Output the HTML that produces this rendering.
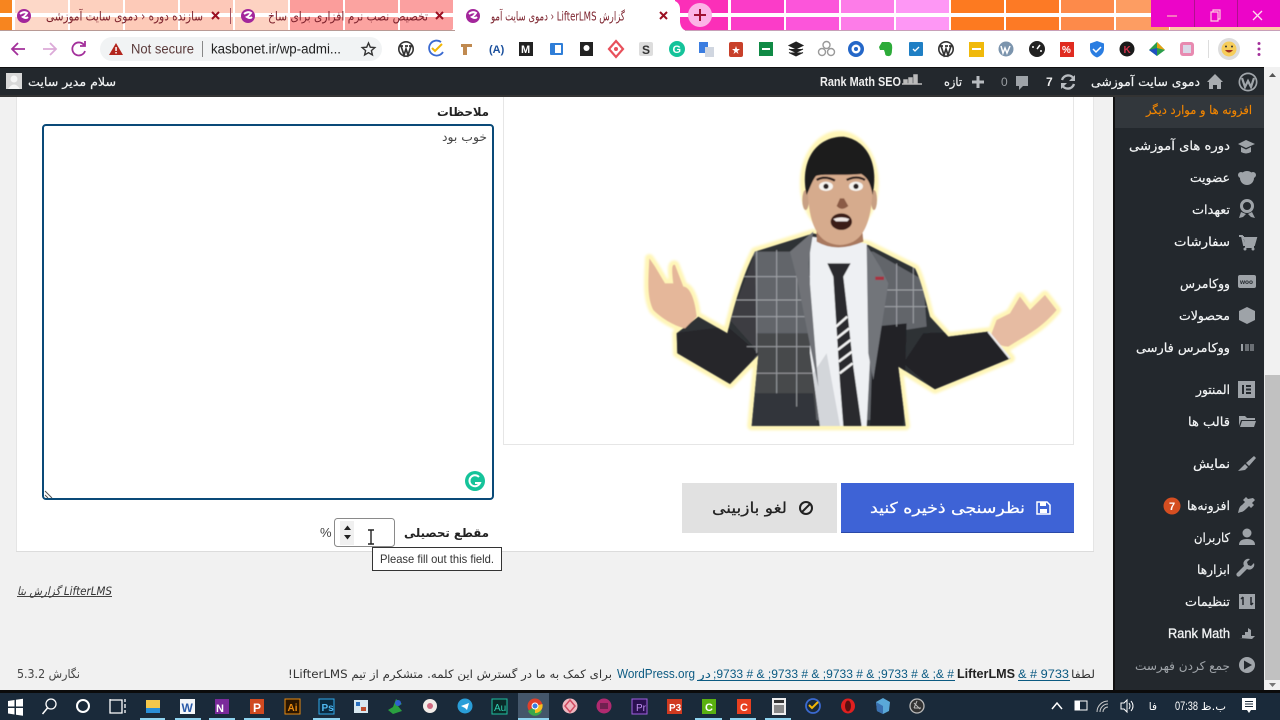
<!DOCTYPE html>
<html lang="fa">
<head>
<meta charset="utf-8">
<title>LifterLMS</title>
<style>
html,body{margin:0;padding:0;width:1280px;height:720px;overflow:hidden;background:#f1f1f1}
svg{position:absolute;left:0;top:0;display:block;filter:blur(.3px)}
text{font-family:"DejaVu Sans","Liberation Sans",sans-serif}
.l{font-family:"Liberation Sans","DejaVu Sans",sans-serif}
.r{direction:rtl;text-anchor:start}
.m{fill:#f2f4f5;font-size:12.5px;stroke:#f2f4f5;stroke-width:.2px}
.d{stroke:#333;stroke-width:.15px}
</style>
</head>
<body>
<svg width="1280" height="720" viewBox="0 0 1280 720" xmlns="http://www.w3.org/2000/svg">
<defs>
<clipPath id="jk"><path d="M520,340 L345,395 Q300,480 262,640 L175,590 L110,640 L112,700 L270,792 L355,705 L335,918 L797,918 L775,740 L885,808 L1112,715 L1045,635 L925,650 L870,590 Q840,470 825,445 L685,375 Z"/></clipPath>
<filter id="gl" x="-10%" y="-10%" width="120%" height="120%"><feGaussianBlur stdDeviation="4"/></filter>
<filter id="sf" x="-5%" y="-5%" width="110%" height="110%"><feGaussianBlur stdDeviation="1.400"/></filter>
<g id="fav"><circle r="7" fill="#a3269b"/><path d="M-4,-2 Q0,-5 3,-3 Q1,0 -1,1 Q2,3 4,1" fill="none" stroke="#fff" stroke-width="2"/></g>
<g id="wp"><circle r="8" fill="#333"/><circle r="6.4" fill="#fff"/><path d="M-5,-3 L-2,6 L0,0 L2,6 L5,-3 M-6,-3 H-3 M-1,-3 H2 M3,-3 H6" fill="none" stroke="#333" stroke-width="1.7"/></g>
</defs>

<!-- tab strip -->
<rect width="1280" height="31" fill="#fff"/>
<rect x="0" y="0" width="12" height="31" fill="#f7851f"/>
<rect x="15" y="0" width="53" height="31" fill="#fdd8c8"/>
<rect x="70" y="0" width="53" height="31" fill="#fdd0be"/>
<rect x="125" y="0" width="53" height="31" fill="#fdcab8"/>
<rect x="180" y="0" width="53" height="31" fill="#fdc8b8"/>
<rect x="235" y="0" width="53" height="31" fill="#fdd2c2"/>
<rect x="290" y="0" width="53" height="31" fill="#fb9d9b"/>
<rect x="345" y="0" width="53" height="31" fill="#fba3a0"/>
<rect x="400" y="0" width="53" height="31" fill="#fba0a0"/>
<rect x="675" y="0" width="53" height="31" fill="#fb2fb8"/>
<rect x="731" y="0" width="53" height="31" fill="#fb3cc8"/>
<rect x="786" y="0" width="53" height="31" fill="#fc55da"/>
<rect x="841" y="0" width="53" height="31" fill="#fd7ce8"/>
<rect x="896" y="0" width="53" height="31" fill="#fe97f5"/>
<rect x="951" y="0" width="53" height="31" fill="#fd7a20"/>
<rect x="1006" y="0" width="53" height="31" fill="#fd7a25"/>
<rect x="1061" y="0" width="53" height="31" fill="#fd8a4a"/>
<rect x="1116" y="0" width="53" height="31" fill="#fd9d62"/>
<rect x="1170" y="27" width="110" height="4" fill="#fdc9a8"/>
<rect x="0" y="13" width="456" height="4" fill="#fff"/>
<rect x="675" y="13" width="500" height="4" fill="#fff"/>
<rect x="1151" y="0" width="129" height="27" fill="#ec05c8"/>
<rect x="1194" y="0" width="1" height="27" fill="#b0108f"/>
<rect x="1237" y="0" width="1" height="27" fill="#b0108f"/>
<path d="M1167,16 H1177" stroke="#fbb" stroke-width="1.2"/>
<path d="M1211,12 h7 v9 h-7 z M1213,12 v-2 h7 v9 h-2" fill="none" stroke="#fcd" stroke-width="1.2"/>
<path d="M1253,11 l9,9 M1262,11 l-9,9" stroke="#fde" stroke-width="1.3"/>
<path d="M447,31 Q455,31 456,22 V8 Q456,0 466,0 H669 Q679,0 680,8 V22 Q681,31 689,31 Z" fill="#fff"/>
<rect x="0" y="30" width="455" height="1" fill="#b89a95"/>
<rect x="685" y="30" width="595" height="1" fill="#c8a0b8"/>
<use href="#fav" x="24" y="16"/>
<text class="r" x="203" y="20.500" font-size="12.500" fill="#7a1f2a" textLength="157" lengthAdjust="spacingAndGlyphs">سازنده دوره ‹ دموی سایت آموزشی</text>
<path d="M212,12 l7,7 M219,12 l-7,7" stroke="#9b1022" stroke-width="2"/>
<rect x="230" y="8" width="1" height="16" fill="#a05060"/>
<use href="#fav" x="248" y="16"/>
<text class="r" x="428" y="20.500" font-size="12.500" fill="#7a1f2a" textLength="160" lengthAdjust="spacingAndGlyphs">تخصیص نصب نرم افزاری برای ساخ</text>
<path d="M436,12 l7,7 M443,12 l-7,7" stroke="#9b1022" stroke-width="2"/>
<use href="#fav" x="473" y="16"/>
<text class="r" x="625" y="20.500" font-size="12.500" fill="#7a1f2a" textLength="134" lengthAdjust="spacingAndGlyphs">گزارش LifterLMS ‹ دموی سایت آمو</text>
<path d="M660,12 l7,7 M667,12 l-7,7" stroke="#9b1022" stroke-width="2"/>
<circle cx="700" cy="15" r="12" fill="#fcb4e6"/>
<path d="M694,15 H706 M700,9 V21" stroke="#a01030" stroke-width="2"/>

<!-- toolbar -->
<rect y="31" width="1280" height="36" fill="#fff"/>
<path d="M25,49 H13 M18,43 L12,49 L18,55" fill="none" stroke="#a3309b" stroke-width="1.8"/>
<path d="M43,49 H55 M50,43 L56,49 L50,55" fill="none" stroke="#dcaad8" stroke-width="1.8"/>
<path d="M84,45 A6.5,6.5 0 1 0 85,51 M85,41 V46 H80" fill="none" stroke="#a3309b" stroke-width="1.8"/>
<rect x="100" y="37" width="282" height="24" rx="12" fill="#f1f3f4"/>
<path d="M116,43 L123,55 H109 Z" fill="#b3261e"/>
<rect x="115.300" y="47" width="1.500" height="4" fill="#fff"/><rect x="115.300" y="52" width="1.500" height="1.500" fill="#fff"/>
<text class="l" x="131" y="53.500" font-size="13.500" fill="#5a3a3a" textLength="63" lengthAdjust="spacingAndGlyphs">Not secure</text>
<rect x="202" y="41" width="1" height="16" fill="#888"/>
<text class="l" x="211" y="53.500" font-size="13.500" fill="#222" textLength="130" lengthAdjust="spacingAndGlyphs">kasbonet.ir/wp-admi...</text>
<path d="M368.500,43 l1.800,4.200 4.500,.4 -3.400,3 1,4.400 -3.900,-2.300 -3.900,2.300 1,-4.400 -3.400,-3 4.500,-.4 z" fill="none" stroke="#333" stroke-width="1.400"/>
<use href="#wp" x="406" y="49"/>
<path d="M441,42 A7.500,7.500 0 1 0 443,52" fill="none" stroke="#3b6ad0" stroke-width="1.800"/><path d="M432,48 l3,3 7,-7" fill="none" stroke="#f2b705" stroke-width="2"/>
<path d="M461,44 H472 V47 H467 V55 H463 V47 H461 Z" fill="#c08a50"/>
<text class="l" x="489" y="53" font-size="11" font-weight="bold" fill="#1a4f9c">(A)</text>
<rect x="519" y="42" width="14" height="14" fill="#222"/><text class="l" x="521" y="53" font-size="11" font-weight="bold" fill="#fff">M</text>
<rect x="550" y="43" width="13" height="12" rx="1" fill="#2f7ed8"/><rect x="555" y="45" width="6" height="8" fill="#fff"/>
<rect x="580" y="42" width="13" height="14" fill="#222"/><circle cx="586.500" cy="48" r="3" fill="#fff"/>
<path d="M616,41 l7,8 -7,8 -7,-8 z" fill="none" stroke="#e8505b" stroke-width="2.200"/><circle cx="616" cy="49" r="2" fill="#e8505b"/>
<rect x="639" y="42" width="14" height="14" rx="2" fill="#ddd"/><text class="l" x="642" y="54" font-size="12" font-weight="bold" fill="#333">S</text>
<circle cx="677" cy="49" r="8" fill="#15c39a"/><text class="l" x="672.500" y="53" font-size="11" font-weight="bold" fill="#fff">G</text>
<rect x="699" y="42" width="9" height="11" fill="#3b7de0"/><rect x="705" y="47" width="9" height="10" fill="#d0d6e0"/>
<rect x="729" y="42" width="14" height="15" rx="2" fill="#c8402a"/><path d="M736,46 l1,3 h3 l-2.500,2 1,3 -2.500,-2 -2.500,2 1,-3 -2.500,-2 h3 z" fill="#fff"/>
<rect x="759" y="42" width="14" height="14" fill="#108a45"/><rect x="762" y="48" width="8" height="2" fill="#fff"/>
<path d="M796,42 l7,3.500 -7,3.500 -7,-3.500 z M789,49 l7,3.500 7,-3.500 M789,52.500 l7,3.500 7,-3.500" fill="#222" stroke="#222" stroke-width="1"/>
<g fill="none" stroke="#999" stroke-width="1.400"><circle cx="822" cy="52" r="3.500"/><circle cx="831" cy="52" r="3.500"/><circle cx="826.500" cy="45" r="3.500"/></g>
<circle cx="856" cy="49" r="8" fill="#2467c8"/><circle cx="856" cy="49" r="4.500" fill="#fff"/><circle cx="856" cy="49" r="2" fill="#2467c8"/>
<path d="M882,42 h7 q4,1 3,8 q0,7 -4,6 q-3,0 -3,-3 l-1,-3 h-4 l-1,-3 z" fill="#2dab39"/>
<rect x="909" y="42" width="14" height="14" rx="1" fill="#1f7fc4"/><path d="M913,49 l2,2 4,-4" fill="none" stroke="#fff" stroke-width="1.300"/>
<use href="#wp" x="946" y="49"/>
<rect x="969" y="42" width="15" height="15" fill="#f0b90b"/><rect x="972" y="48" width="9" height="2" fill="#fff"/>
<circle cx="1006" cy="49" r="7.500" fill="#7b94ad"/><path d="M1001,46 l2,7 2,-5 2,5 3,-7" fill="none" stroke="#fff" stroke-width="1.500"/>
<circle cx="1037" cy="49" r="8" fill="#222"/><path d="M1037,49 l3,-4" stroke="#fff" stroke-width="1.500"/><circle cx="1033" cy="47" r="1" fill="#fff"/><circle cx="1041" cy="51" r="1" fill="#fff"/>
<rect x="1060" y="42" width="14" height="15" fill="#e02b20"/><text class="l" x="1062" y="53" font-size="10" font-weight="bold" fill="#fff">%</text>
<path d="M1097,41 l7,2.500 v5 q0,6 -7,9 q-7,-3 -7,-9 v-5 z" fill="#2a7de1"/><path d="M1093,49 l3,3 5,-5" fill="none" stroke="#fff" stroke-width="1.500"/>
<circle cx="1127" cy="49" r="7.500" fill="#1a1a1a"/><text class="l" x="1123.500" y="53" font-size="10" font-weight="bold" fill="#d0304a">K</text>
<path d="M1149,50 l8,-8 8,8 -8,6 z" fill="#2a9d4a"/><path d="M1157,42 l8,8 -8,-2 z" fill="#e8a010"/><path d="M1149,50 l8,-2 v8 z" fill="#2050c0"/>
<rect x="1180" y="42" width="14" height="14" rx="3" fill="#e88ab0"/><rect x="1183" y="45" width="8" height="8" fill="#d9d9e8"/>
<rect x="1208" y="40" width="1" height="18" fill="#ddd"/>
<circle cx="1229" cy="49" r="11" fill="#ddd"/><circle cx="1229" cy="49" r="7.500" fill="#f6cd5a"/><path d="M1225,50 q4,5 8,0 z" fill="#a03020"/><circle cx="1226" cy="46.500" r="1" fill="#333"/><circle cx="1232" cy="46.500" r="1" fill="#333"/>
<circle cx="1259" cy="43.500" r="1.500" fill="#a3309b"/><circle cx="1259" cy="49" r="1.500" fill="#a3309b"/><circle cx="1259" cy="54.500" r="1.500" fill="#a3309b"/>

<!-- page -->
<rect y="96" width="1264" height="594" fill="#f1f1f1"/>
<rect x="1264" y="67" width="16" height="625" fill="#f1f1f1"/>
<rect x="1265" y="375" width="15" height="305" fill="#c1c1c1"/>
<path d="M1269,77 h7 l-3.500,-4 z" fill="#555"/>
<path d="M1269,683 h7 l-3.500,4 z" fill="#777"/>

<!-- card -->
<rect x="16" y="96" width="1078" height="455" fill="#fff"/>
<rect x="16" y="551" width="1078" height="1" fill="#dcdcdc"/>
<rect x="16" y="96" width="1" height="455" fill="#e5e5e5"/>
<rect x="1093" y="96" width="1" height="455" fill="#e5e5e5"/>
<path d="M503.500,96 V444.500 H1073.500 V96" fill="none" stroke="#e6e6e6"/>

<!-- person -->
<g transform="translate(640,120) scale(.3333)">
<g fill="#fff6b8" stroke="#fff6b8" stroke-width="26" stroke-linejoin="round" filter="url(#gl)">
<path d="M520,340 L345,395 Q300,480 262,640 L175,590 L110,640 L112,700 L270,792 L355,705 L335,918 L797,918 L775,740 L885,808 L1112,715 L1045,635 L925,650 L870,590 Q840,470 825,445 L685,375 Z"/>
<path d="M28,415 C25,480 20,530 40,570 C70,600 110,620 135,625 L170,590 C165,540 150,500 130,500 L105,435 C95,430 95,450 100,490 L75,490 L45,440 Z"/>
<path d="M1055,640 C1060,670 1085,680 1105,680 C1150,650 1200,630 1250,570 L1215,525 L1170,570 L1140,530 L1110,580 L1070,600Z"/>
<ellipse cx="598" cy="190" rx="105" ry="145"/>
</g>
<g filter="url(#sf)">
<path d="M520,340 L345,395 Q300,480 262,640 L175,590 L110,640 L112,700 L270,792 L355,705 L335,918 L797,918 L775,740 L885,808 L1112,715 L1045,635 L925,650 L870,590 Q840,470 825,445 L685,375 Z" fill="#2e3034"/>
<g clip-path="url(#jk)">
<path d="M340,395 L700,395 L850,480 L860,620 L730,640 L715,900 L520,900 L350,720 Z" fill="#62656a"/>
<path d="M345,640 L520,640 L530,918 L335,918 Z" fill="#46484c"/>
<path d="M345,820 L520,820 L530,918 L335,918 Z" fill="#33353a"/>
<path d="M700,620 L800,610 L790,918 L690,918 Z" fill="#232427"/>
<path d="M100,640 L262,620 L355,700 L270,795 L110,710 Z" fill="#26272a"/>
<path d="M270,600 L345,400 L350,690 Z" fill="#3c3e42"/>
<path d="M850,640 L1112,630 L1112,720 L885,810 L790,730 Z" fill="#232427"/>
<g stroke="#b3b6ba" stroke-width="3" fill="none" opacity=".8">
<path d="M300,470 H520 M285,540 H510 M275,590 H510 M320,680 H515 M320,760 H520 M720,510 H850 M720,560 H860"/>
<path d="M350,390 V700 M410,390 V820 M470,390 V860 M770,430 V620 M820,440 V610"/>
</g>
</g>
<path d="M510,350 L680,370 L695,620 L680,918 L540,918 L510,700 Z" fill="#eef0f3"/>
<path d="M560,700 L600,918 L540,918 L520,760 Z" fill="#d3d6da"/>
<path d="M520,335 L450,395 L472,480 L515,700 L535,800 L505,430 Z" fill="#6f7277"/>
<path d="M680,375 L720,440 L745,490 L700,780 L685,700 Z" fill="#72757a"/>
<path d="M562,430 L632,430 L610,470 L625,600 L640,740 L665,918 L610,918 L600,790 L580,470 Z" fill="#2a2b2e"/>
<g stroke="#f5f5f5" stroke-width="7"><path d="M588,620 L622,590 M590,655 L628,625 M593,690 L632,660 M596,725 L636,695 M599,760 L638,730"/></g>
<path d="M706,470 h26 v10 h-26 z" fill="#a8303f"/>
<path d="M530,300 L530,365 Q590,400 670,365 L665,310 Z" fill="#a9795f"/>
<ellipse cx="497" cy="240" rx="10" ry="30" fill="#c8a084"/><ellipse cx="702" cy="240" rx="9" ry="30" fill="#c8a084"/>
<path d="M503,200 Q505,335 560,365 Q600,385 640,365 Q695,335 698,200 Q695,130 600,130 Q505,130 503,200 Z" fill="#d6ab8d"/>
<path d="M500,225 C478,120 530,50 610,50 C680,60 718,130 698,225 C692,195 686,175 664,162 C600,168 550,160 528,168 C515,185 510,205 500,225 Z" fill="#1d1a1a"/>
<ellipse cx="558" cy="199" rx="21" ry="14" fill="#f7f4f0"/><circle cx="558" cy="199" r="8" fill="#2a2020"/>
<ellipse cx="648" cy="199" rx="21" ry="14" fill="#f7f4f0"/><circle cx="648" cy="199" r="8" fill="#2a2020"/>
<path d="M530,180 Q555,165 585,182 M620,180 Q650,165 675,180" fill="none" stroke="#2a1f1a" stroke-width="7"/>
<path d="M590,258 Q605,275 625,258 L612,235 L600,235 Z" fill="#8a5a45"/>
<ellipse cx="604" cy="305" rx="32" ry="25" fill="#3a1a18"/><path d="M580,297 Q604,287 628,297 L622,304 H588 Z" fill="#f0e8e5"/>
<path d="M28,415 C25,480 20,530 40,570 C70,600 110,620 135,625 L170,590 C165,540 150,500 130,500 L105,435 C95,430 95,450 100,490 L75,490 L45,440 Z" fill="#e5b79a"/>
<path d="M1055,640 C1060,670 1085,680 1105,680 C1150,650 1200,630 1250,570 L1215,525 L1170,570 L1140,530 L1110,580 L1070,600Z" fill="#e6bba2"/>
<path d="M1045,635 L1110,715" stroke="#eee" stroke-width="6" fill="none"/>
</g>
</g>

<!-- form -->
<text class="r" x="489" y="116" font-size="12" font-weight="bold" fill="#222" textLength="52" lengthAdjust="spacingAndGlyphs">ملاحظات</text>
<rect x="43" y="125" width="450" height="374" rx="3" fill="#fff" stroke="#0a4a78" stroke-width="2"/>
<text class="r" x="487" y="141" font-size="12" fill="#444" textLength="45" lengthAdjust="spacingAndGlyphs">خوب بود</text>
<circle cx="475" cy="481" r="10" fill="#15c39a"/>
<path d="M479,477 A5.500,5.500 0 1 0 480,483 H475" fill="none" stroke="#fff" stroke-width="2"/>
<path d="M45,491 l7,7 M45,495 l3,3" stroke="#555"/>

<rect x="334.500" y="518.500" width="60" height="28" rx="3" fill="#fff" stroke="#8a8a8a"/>
<rect x="340" y="521" width="14" height="24" fill="#f0f0f0"/>
<path d="M344,530 h7 l-3.500,-4.500 z M344,535 h7 l-3.500,4.500 z" fill="#222"/>
<text class="l" x="320" y="537" font-size="13" fill="#444">%</text>
<text class="r" x="489" y="537" font-size="12" font-weight="bold" fill="#222" textLength="85" lengthAdjust="spacingAndGlyphs">مقطع تحصیلی</text>
<path d="M368,530 h6 M368,544 h6 M371,530 V544" stroke="#222" stroke-width="1.400"/>
<rect x="372.500" y="547.500" width="129" height="23" fill="#fff" stroke="#333"/>
<text class="l" x="380" y="563" font-size="12" fill="#333" textLength="114" lengthAdjust="spacingAndGlyphs">Please fill out this field.</text>

<!-- buttons -->
<rect x="841" y="483" width="233" height="50" fill="#3e63d6"/>
<rect x="841" y="532" width="233" height="1" fill="#2a48a8"/>
<rect x="682" y="483" width="155" height="50" fill="#e1e1e1"/>
<path d="M1037,502 h10 l3,3 v9 h-13 z" fill="none" stroke="#fff" stroke-width="1.500"/><rect x="1040" y="502" width="6" height="4" fill="#fff"/><rect x="1040" y="509" width="7" height="4" fill="#fff"/>
<text class="r" x="1025" y="513" font-size="15" fill="#fff" stroke="#fff" stroke-width=".25" textLength="155" lengthAdjust="spacingAndGlyphs">نظرسنجی ذخیره کنید</text>
<circle cx="806" cy="508" r="6" fill="none" stroke="#222" stroke-width="2"/><path d="M802,512 l8,-8" stroke="#222" stroke-width="2"/>
<text class="r" x="787" y="513" font-size="15" fill="#222" stroke="#222" stroke-width=".25" textLength="75" lengthAdjust="spacingAndGlyphs">لغو بازبینی</text>

<!-- footer -->
<text x="112" y="595" font-size="11.500" font-style="italic" fill="#333" class="r" textLength="95" lengthAdjust="spacingAndGlyphs">LifterLMS گزارش بتا</text>
<rect x="17" y="596" width="95" height="1" fill="#444"/>
<text x="80" y="678" font-size="12" fill="#444" class="r" textLength="63" lengthAdjust="spacingAndGlyphs">نگارش 5.3.2</text>
<g font-size="11.500">
<text x="1095" y="678" class="r" fill="#333" textLength="24" lengthAdjust="spacingAndGlyphs">لطفا</text>
<text x="1018" y="678" fill="#0b5a82" class="l" font-size="12" textLength="51" lengthAdjust="spacingAndGlyphs">&amp; # 9733</text>
<text x="957" y="678" fill="#222" class="l" font-size="12.500" font-weight="bold" textLength="58" lengthAdjust="spacingAndGlyphs">LifterLMS</text>
<text x="713" y="678" fill="#0b5a82" class="l" font-size="12" textLength="241" lengthAdjust="spacingAndGlyphs">;9733 # &amp; ;9733 # &amp; ;9733 # &amp; ;9733 # &amp; ;&amp; #</text>
<text x="711" y="678" class="r" fill="#0b5a82" textLength="13" lengthAdjust="spacingAndGlyphs">در</text>
<text x="617" y="678" fill="#0b5a82" class="l" font-size="12.500" textLength="78" lengthAdjust="spacingAndGlyphs">WordPress.org</text>
<text x="612" y="678" class="r" fill="#333" textLength="324" lengthAdjust="spacingAndGlyphs">برای کمک به ما در گسترش این کلمه. متشکرم از تیم LifterLMS!</text>
</g>
<rect x="697" y="680" width="258" height="1" fill="#0b5a82"/>
<rect x="1018" y="680" width="52" height="1" fill="#0b5a82"/>

<!-- admin bar -->
<rect y="67" width="1264" height="29" fill="#23282d"/>
<rect y="67" width="1264" height="1" fill="#111"/>
<rect y="95" width="1264" height="2" fill="#333"/>
<rect x="6" y="73" width="16" height="16" fill="#d8d8d8"/><circle cx="14" cy="79" r="3.500" fill="#f5f5f5"/><path d="M8,89 q6,-9 12,0 z" fill="#f5f5f5"/>
<text class="r m" x="116" y="86" style="font-size:12px" textLength="88" lengthAdjust="spacingAndGlyphs">سلام مدیر سایت</text>
<text class="l" x="820" y="86" font-size="12.500" font-weight="bold" fill="#eee" textLength="81" lengthAdjust="spacingAndGlyphs">Rank Math SEO</text>
<path d="M902,84 h20 M904,84 v-4 h3 v4 M909,84 v-6 h3 v6 M914,84 v-9 h3 v9" stroke="#bbb" fill="#bbb" stroke-width="1.500"/>
<text class="r m" x="962" y="86" style="font-size:12px" textLength="18" lengthAdjust="spacingAndGlyphs">تازه</text>
<path d="M972,82 h12 M978,76 v12" stroke="#b8bcc0" stroke-width="3"/>
<text class="l" x="1001" y="86" font-size="12" fill="#9a9ea2">0</text>
<path d="M1016,76 h12 v10 h-5 l-4,4 v-4 h-3 z" fill="#9ea3a8"/>
<text class="l" x="1046" y="86" font-size="12" font-weight="bold" fill="#eee">7</text>
<path d="M1074,79 A6.500,6.500 0 0 0 1062,80 M1062,85 A6.500,6.500 0 0 0 1074,84" fill="none" stroke="#b8bcc0" stroke-width="2.400"/><path d="M1075,75 v6 h-6 z M1061,89 v-6 h6 z" fill="#b8bcc0"/>
<text class="r m" x="1200" y="86" style="font-size:12px" textLength="109" lengthAdjust="spacingAndGlyphs">دموی سایت آموزشی</text>
<path d="M1215,74 l8,8 h-2 v7 h-4 v-4 h-4 v4 h-4 v-7 h-2 z" fill="#a8acb0"/>
<circle cx="1248" cy="82" r="9.500" fill="#a0a5aa"/><circle cx="1248" cy="82" r="7.800" fill="#23282d"/><path d="M1242,78 l3,9 3,-6 3,6 3,-9" fill="none" stroke="#a0a5aa" stroke-width="2.200"/>

<!-- sidebar -->
<rect x="1115" y="97" width="149" height="595" fill="#23282d"/>
<rect x="1113" y="97" width="2" height="595" fill="#111"/>
<rect x="1115" y="97" width="149" height="31" fill="#32373c"/>
<text class="r" x="1252" y="114" font-size="12" fill="#f18500" stroke="#f18500" stroke-width=".15" textLength="106" lengthAdjust="spacingAndGlyphs">افزونه ها و موارد دیگر</text>
<text class="r m" x="1230" y="150" textLength="101" lengthAdjust="spacingAndGlyphs">دوره های آموزشی</text>
<text class="r m" x="1230" y="182" textLength="40" lengthAdjust="spacingAndGlyphs">عضویت</text>
<text class="r m" x="1230" y="214" textLength="38" lengthAdjust="spacingAndGlyphs">تعهدات</text>
<text class="r m" x="1230" y="246" textLength="56" lengthAdjust="spacingAndGlyphs">سفارشات</text>
<text class="r m" x="1230" y="288" textLength="50" lengthAdjust="spacingAndGlyphs">ووکامرس</text>
<text class="r m" x="1230" y="320" textLength="51" lengthAdjust="spacingAndGlyphs">محصولات</text>
<text class="r m" x="1230" y="352" textLength="94" lengthAdjust="spacingAndGlyphs">ووکامرس فارسی</text>
<text class="r m" x="1230" y="394" textLength="34" lengthAdjust="spacingAndGlyphs">المنتور</text>
<text class="r m" x="1230" y="426" textLength="42" lengthAdjust="spacingAndGlyphs">قالب ها</text>
<text class="r m" x="1230" y="468" textLength="37" lengthAdjust="spacingAndGlyphs">نمایش</text>
<text class="r m" x="1230" y="510" textLength="43" lengthAdjust="spacingAndGlyphs">افزونه‌ها</text>
<circle cx="1172" cy="506" r="8.500" fill="#d54e21"/><text class="l" x="1169" y="510" font-size="11" font-weight="bold" fill="#fff">7</text>
<text class="r m" x="1230" y="542" textLength="36" lengthAdjust="spacingAndGlyphs">کاربران</text>
<text class="r m" x="1230" y="574" textLength="33" lengthAdjust="spacingAndGlyphs">ابزارها</text>
<text class="r m" x="1230" y="606" textLength="45" lengthAdjust="spacingAndGlyphs">تنظیمات</text>
<text class="l" x="1168" y="638" font-size="13.500" fill="#f2f4f5" stroke="#f2f4f5" stroke-width=".3" textLength="62" lengthAdjust="spacingAndGlyphs">Rank Math</text>
<text class="r" x="1230" y="670" font-size="12" fill="#a0a5aa" textLength="95" lengthAdjust="spacingAndGlyphs">جمع کردن فهرست</text>
<g fill="#9ea3a8">
<path d="M1238,144 l8,-4 9,4 -9,4 z M1241,147 v5 q5,3 10,0 v-5 l-5,2.500 z"/>
<circle cx="1247" cy="178" r="7"/><circle cx="1241" cy="175" r="3"/><circle cx="1253" cy="175" r="3"/>
<circle cx="1247" cy="206" r="5.500" fill="none" stroke="#9ea3a8" stroke-width="3"/><path d="M1241,212 l-2,6 4,-1 3,-3 z M1252,212 l3,6 -4,-1 -3,-3 z"/>
<path d="M1239,236 h3 l2,9 h10 l2,-7 h-13 v-2 M1245,247 h9" fill="none" stroke="#9ea3a8" stroke-width="2"/><path d="M1244,239 h11 l-1.500,5 h-9 z"/><circle cx="1245" cy="249" r="1.500"/><circle cx="1253" cy="249" r="1.500"/>
<rect x="1238" y="275" width="18" height="13" rx="2"/>
<path d="M1247,307 l8,4 v9 l-8,4 -8,-4 v-9 z"/>
<rect x="1241" y="344" width="2" height="7"/><rect x="1245" y="344" width="4" height="7" fill="#6a6f74"/><rect x="1250" y="344" width="4" height="7" fill="#6a6f74"/>
<rect x="1238" y="381" width="17" height="17"/>
<path d="M1239,416 h6 l2,2 h8 v2 h-14 l-2,6 z M1242,421 h14 l-2,6 h-14 z"/>
<path d="M1254,456 l2,2 -7,8 -3,-3 z M1245,464 l3,3 -3,3 -7,1 2,-2 z"/>
<path d="M1253,498 l2,2 -3,3 2,2 -3,3 -2,-2 -3,3 q-3,3 -5,3 l-3,1 1,-4 q1,-3 3,-4 l3,-3 -2,-2 3,-3 2,2 z"/>
<circle cx="1247" cy="533" r="4.500"/><path d="M1239,545 q0,-6 8,-6 q8,0 8,6 z"/>
<path d="M1254,563 a5,5 0 0 1 -7,6 l-7,7 a2,2 0 0 1 -3,-3 l7,-7 a5,5 0 0 1 6,-7 l-3,3 1,3 3,1 z"/>
<rect x="1239" y="594" width="16" height="15"/>
<path d="M1239,638 h3 v-3 h3 v-3 h3 v-4 l3,2 v6 h4 l-3,3 z"/>
</g>
<path d="M1243,597 v8 M1243,597 l-2,2 M1251,597 v8 M1251,605 l2,-2" stroke="#23282d" stroke-width="1.500" fill="none"/>
<rect x="1242" y="385" width="2" height="9" fill="#23282d"/><rect x="1246" y="385" width="5" height="2" fill="#23282d"/><rect x="1246" y="388.500" width="5" height="2" fill="#23282d"/><rect x="1246" y="392" width="5" height="2" fill="#23282d"/>
<text class="l" x="1240" y="284" font-size="6.500" font-weight="bold" fill="#23282d">woo</text>
<circle cx="1247" cy="665" r="8" fill="#a0a5aa"/><path d="M1244,660.500 L1252,665 L1244,669.500 Z" fill="#23282d"/>

<!-- taskbar -->
<rect y="690" width="1280" height="30" fill="#1a2a3a"/>
<rect y="690" width="1280" height="3" fill="#0b0b0b"/>
<rect x="518" y="693" width="31" height="27" fill="#44566a"/>
<g fill="#8fd3ef">
<rect x="140" y="718" width="25" height="2"/><rect x="175" y="718" width="26" height="2"/><rect x="209" y="718" width="26" height="2"/><rect x="244" y="718" width="26" height="2"/><rect x="313" y="718" width="27" height="2"/><rect x="518" y="718" width="31" height="2"/><rect x="695" y="718" width="27" height="2"/><rect x="730" y="718" width="26" height="2"/><rect x="765" y="718" width="26" height="2"/>
</g>
<path d="M8,701 l6.500,-1 v6.500 h-6.500 z M16,699.800 l7,-1 v7.700 h-7 z M8,708 h6.500 v6.500 l-6.500,-1 z M16,708 h7 v7.700 l-7,-1 z" fill="#fff"/>
<circle cx="51" cy="704" r="5" fill="none" stroke="#fff" stroke-width="1.300"/><path d="M47.500,708 l-5,6" stroke="#fff" stroke-width="1.500"/>
<circle cx="83" cy="706" r="6" fill="none" stroke="#fff" stroke-width="2"/>
<path d="M110,700 h12 v13 h-12 z M110,700 v-1 M125,699 v3 M125,704 v4 M125,710 v3" fill="none" stroke="#fff" stroke-width="1.300"/>
<rect x="146" y="700" width="14" height="13" fill="#f5c84b"/><rect x="146" y="708" width="14" height="5" fill="#2a8fd8"/>
<rect x="180" y="699" width="15" height="15" fill="#f4f6f8"/><text class="l" x="181.500" y="712" font-size="12" font-weight="bold" fill="#2a5aa8">W</text>
<rect x="215" y="699" width="14" height="15" fill="#7a2a9a"/><text class="l" x="216" y="712" font-size="11" font-weight="bold" fill="#fff">N</text>
<rect x="250" y="699" width="14" height="15" fill="#d04a20"/><text class="l" x="253" y="712" font-size="12" font-weight="bold" fill="#fff">P</text>
<rect x="285" y="699" width="15" height="15" fill="#2a1500" stroke="#e88a10"/><text class="l" x="287.500" y="711" font-size="10" font-weight="bold" fill="#e88a10">Ai</text>
<rect x="319" y="699" width="15" height="15" fill="#0a2a40" stroke="#30a8e8"/><text class="l" x="321.500" y="711" font-size="10" font-weight="bold" fill="#50b8f0">Ps</text>
<rect x="354" y="700" width="14" height="13" fill="#d8e8f0"/><rect x="356" y="702" width="4" height="4" fill="#2a70c0"/><rect x="361" y="707" width="5" height="4" fill="#c05030"/>
<path d="M396,699 l6,5 -4,2 4,5 -9,3 -5,-4 5,-3 z" fill="#2aa040"/><circle cx="398" cy="703" r="3" fill="#3060d0"/>
<circle cx="430" cy="706" r="7" fill="#f2ece8"/><circle cx="430" cy="706" r="3" fill="#d06a80"/>
<circle cx="465" cy="706" r="7.500" fill="#2a9ed8"/><path d="M461,706 l8,-3 -2,7 -2,-2 z" fill="#fff"/>
<rect x="492" y="699" width="15" height="15" fill="#0a2a28" stroke="#20c0a0"/><text class="l" x="494" y="711" font-size="10" fill="#30d0b0">Au</text>
<circle cx="535" cy="706" r="7.500" fill="#e0402a"/><path d="M535,706 L528,711 A7.500,7.500 0 0 0 542,711 Z" fill="#3aa84a"/><path d="M535,706 L535,713 A7.500,7.500 0 0 0 542.500,704 Z" fill="#f5c020"/><circle cx="535" cy="706" r="3" fill="#3a7ce0" stroke="#fff"/>
<circle cx="570" cy="706" r="7.500" fill="#f0b8c0"/><path d="M570,700 l5,6 -5,6 -5,-6 z" fill="none" stroke="#d04a60" stroke-width="1.500"/>
<circle cx="604" cy="706" r="7.500" fill="#b02a70"/><rect x="600" y="703" width="8" height="6" fill="#702050"/>
<rect x="632" y="699" width="15" height="15" fill="#2a1050" stroke="#a060e0"/><text class="l" x="636" y="711" font-size="10" fill="#c090f0">Pr</text>
<rect x="667" y="699" width="15" height="15" fill="#d03a20"/><text class="l" x="669" y="711" font-size="10" font-weight="bold" fill="#fff">P3</text>
<rect x="702" y="699" width="14" height="15" fill="#5ab010"/><text class="l" x="705" y="711" font-size="11" font-weight="bold" fill="#fff">C</text>
<rect x="737" y="699" width="14" height="15" fill="#e84020"/><text class="l" x="740" y="711" font-size="11" font-weight="bold" fill="#fff">C</text>
<rect x="772" y="698" width="14" height="17" fill="#eee"/><rect x="774" y="700" width="10" height="3" fill="#333"/><rect x="774" y="705" width="10" height="8" fill="#888"/>
<circle cx="813" cy="706" r="7" fill="none" stroke="#3b6ad0" stroke-width="1.800"/><path d="M809,705 l3,3 6,-6" fill="none" stroke="#f2b705" stroke-width="2"/>
<ellipse cx="848" cy="706" rx="7" ry="7.500" fill="#e02020"/><ellipse cx="848" cy="706" rx="3" ry="5.500" fill="#5a1010"/>
<path d="M883,698 l7,4 -1,9 -6,3 -6,-3 -1,-9 z" fill="#5aa8d8"/><path d="M883,706 v8 l-6,-3 -1,-9 z" fill="#3a70b0"/>
<circle cx="917" cy="706" r="7" fill="#333" stroke="#bbb" stroke-width="1.300"/><path d="M917,701 l-3,7 M921,708 l-7,0 M914,703 l6,6" stroke="#bbb"/>
<path d="M1052,709 l5,-6 5,6" fill="none" stroke="#fff" stroke-width="1.500"/>
<rect x="1075" y="701" width="12" height="9" fill="none" stroke="#fff"/><rect x="1075" y="701" width="5" height="9" fill="#fff"/>
<path d="M1097,712 a11,11 0 0 1 11,-11 M1100,712 a8,8 0 0 1 8,-8 M1103,712 a5,5 0 0 1 5,-5" fill="none" stroke="#ccc"/>
<path d="M1121,703 h3 l3,-3 v12 l-3,-3 h-3 z" fill="none" stroke="#fff"/><path d="M1129,703 q2,3 0,6 M1131,701 q4,5 0,10" fill="none" stroke="#fff"/>
<text class="r" x="1157" y="710" font-size="10.500" fill="#fff">فا</text>
<text class="l" x="1175" y="710" font-size="11.500" fill="#fff" textLength="23" lengthAdjust="spacingAndGlyphs">07:38</text>
<text class="r" x="1226" y="710" font-size="10.500" fill="#fff" textLength="25" lengthAdjust="spacingAndGlyphs">ب.ظ</text>
<path d="M1242,698 h14 v12 h-5 l-2,3 -2,-3 h-5 z" fill="#fff"/><path d="M1245,701.500 h8 M1245,704 h8 M1245,706.500 h8" stroke="#1a2a3a"/>
</svg>
</body>
</html>
